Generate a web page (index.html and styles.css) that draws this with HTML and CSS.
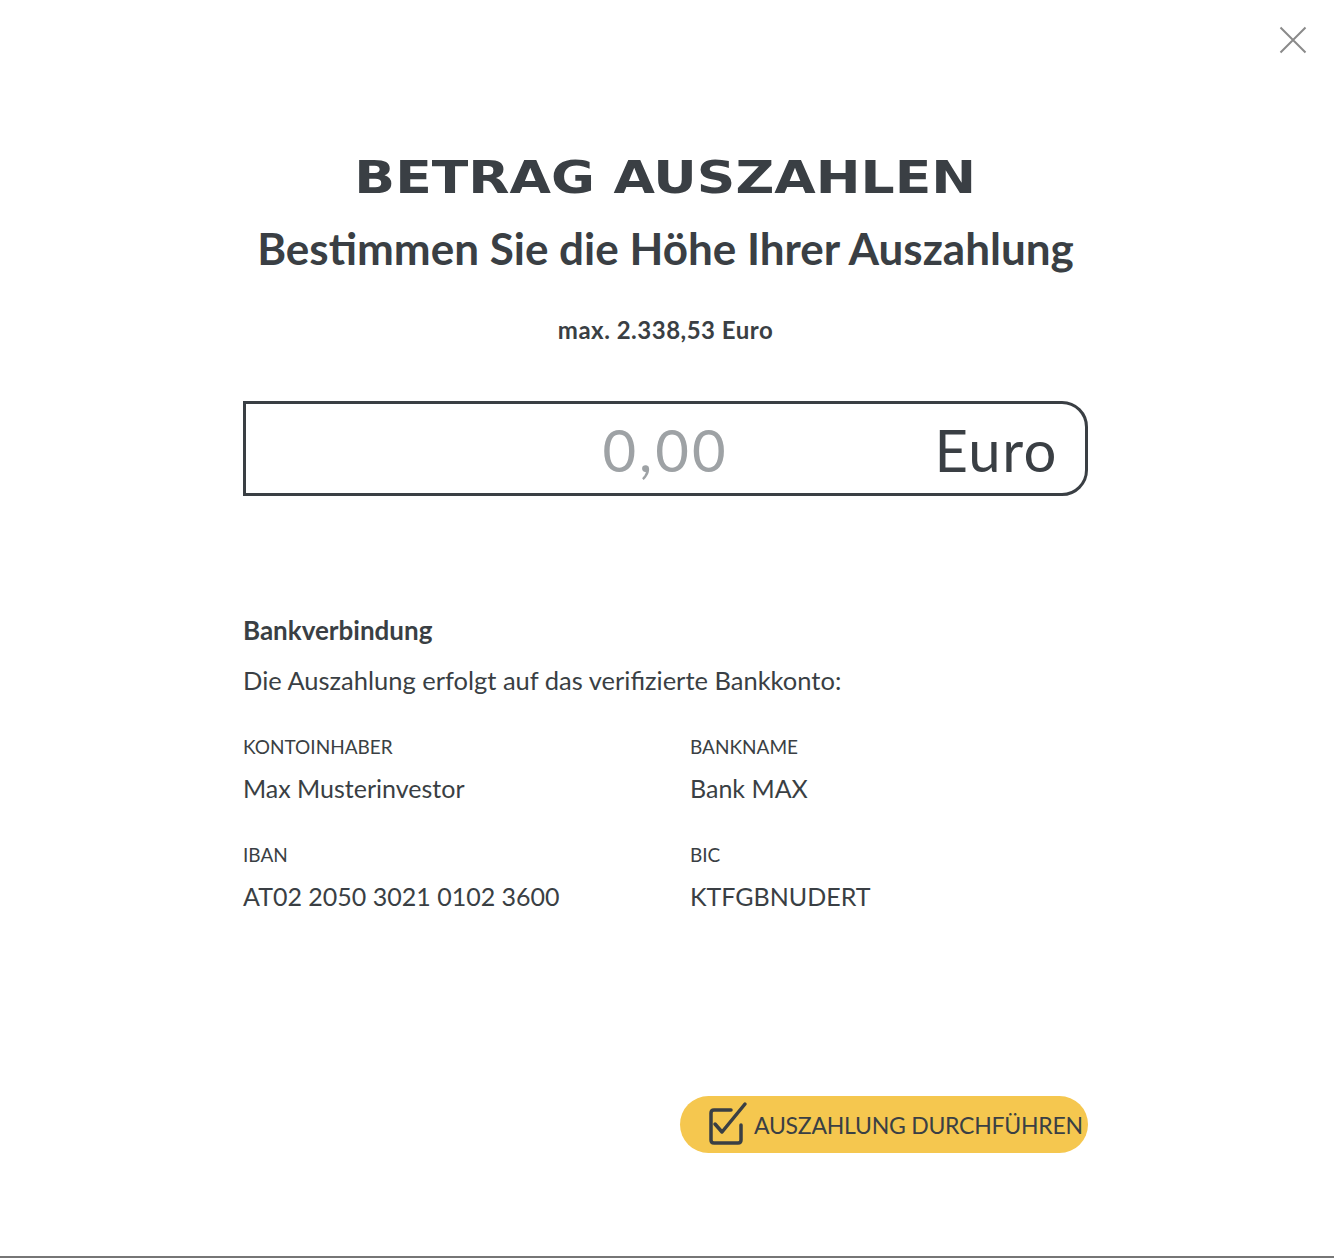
FILE: index.html
```html
<!DOCTYPE html>
<html lang="de">
<head>
<meta charset="utf-8">
<title>Betrag auszahlen</title>
<link rel="stylesheet" href="styles.css">
</head>
<body>
<div class="modal">
  <button class="close" aria-label="Schließen">
    <svg width="28" height="28" viewBox="0 0 28 28"><path d="M1.5 1.5 L26.5 26.5 M26.5 1.5 L1.5 26.5" stroke="#8a8a8a" stroke-width="2" fill="none"/></svg>
  </button>
  <div class="content">
    <h1 class="title"><span class="title-text">BETRAG AUSZAHLEN</span></h1>
    <h2 class="subtitle">Bestimmen Sie die Höhe Ihrer Auszahlung</h2>
    <p class="max">max. 2.338,53 Euro</p>
    <div class="amount">
      <span class="amount-value">0,00</span>
      <span class="amount-unit">Euro</span>
    </div>
    <h3 class="section">Bankverbindung</h3>
    <p class="lead">Die Auszahlung erfolgt auf das verifizierte Bankkonto:</p>
    <div class="grid">
      <div class="field">
        <div class="label">KONTOINHABER</div>
        <div class="value">Max Musterinvestor</div>
      </div>
      <div class="field">
        <div class="label">BANKNAME</div>
        <div class="value">Bank MAX</div>
      </div>
      <div class="field">
        <div class="label">IBAN</div>
        <div class="value">AT02 2050 3021 0102 3600</div>
      </div>
      <div class="field">
        <div class="label">BIC</div>
        <div class="value">KTFGBNUDERT</div>
      </div>
    </div>
    <div class="actions">
      <button class="submit">
        <svg class="check" width="40" height="44" viewBox="0 0 40 44"><path d="M33 24 V39 Q33 42 30 42 H6 Q3 42 3 39 V12 Q3 9 6 9 H23" stroke="#3a3f44" stroke-width="3.5" fill="none" stroke-linecap="round" stroke-linejoin="round"/><path d="M7 23 L14 31 L37 3" stroke="#3a3f44" stroke-width="3.5" fill="none" stroke-linecap="round" stroke-linejoin="round"/></svg>
        <span class="submit-text">AUSZAHLUNG DURCHFÜHREN</span>
      </button>
    </div>
  </div>
</div>
</body>
</html>
```

FILE: styles.css
```css
html, body {
  margin: 0;
  padding: 0;
}
body {
  background: #767676;
  font-family: "Lato", "Open Sans", sans-serif;
  color: #3a3f44;
}
.modal {
  position: relative;
  height: 1256px;
  background: #ffffff;
}
.close {
  position: absolute;
  top: 26px;
  right: 27px;
  border: 0;
  background: none;
  padding: 0;
  width: 28px;
  height: 28px;
}
.content {
  width: 845px;
  margin-left: 243px;
  padding-top: 148px;
}
.title {
  margin: 0;
  text-align: center;
  font-family: "DejaVu Sans", sans-serif;
  font-weight: bold;
  font-size: 45px;
  line-height: 60px;
}
.title-text {
  display: inline-block;
  transform: scaleX(1.19);
}
.subtitle {
  margin: 12px 0 0;
  text-align: center;
  font-weight: 700;
  font-size: 44px;
  line-height: 56px;
}
.max {
  margin: 40px 0 0;
  text-align: center;
  font-weight: 700;
  font-size: 24px;
  line-height: 28px;
  letter-spacing: 0.5px;
}
.amount {
  margin-top: 57px;
  height: 87px;
  padding-top: 2px;
  border: 3px solid #3a3f44;
  border-radius: 0 26px 26px 0;
  display: flex;
  align-items: center;
  position: relative;
  padding-right: 27px;
}
.amount-value {
  position: absolute;
  left: 0;
  right: 0;
  text-align: center;
  font-size: 58px;
  letter-spacing: 3px;
  color: #9ea2a5;
}
.amount-unit {
  margin-left: auto;
  font-size: 58px;
  letter-spacing: 1.5px;
  position: relative;
}
.section {
  margin: 119px 0 0;
  font-weight: 700;
  font-size: 26px;
  line-height: 30px;
}
.lead {
  margin: 19px 0 0;
  font-size: 25.5px;
  line-height: 32px;
}
.grid {
  margin-top: 40px;
  display: grid;
  grid-template-columns: 447px 1fr;
  row-gap: 41px;
}
.label {
  font-size: 19px;
  line-height: 22px;
}
.value {
  margin-top: 15px;
  font-size: 25px;
  line-height: 30px;
}
.actions {
  margin-top: 185px;
  display: flex;
  justify-content: flex-end;
}
.submit {
  width: 408px;
  height: 57px;
  border: 0;
  border-radius: 29px;
  background: #f5c74f;
  color: #3a3f44;
  display: flex;
  align-items: center;
  padding: 0 0 0 28px;
  font-family: "Lato", sans-serif;
  font-size: 23px;
  letter-spacing: -0.25px;
  gap: 6px;
}
.check {
  flex-shrink: 0;
  margin-top: -4px;
}
.submit-text {
  white-space: nowrap;
}
```
